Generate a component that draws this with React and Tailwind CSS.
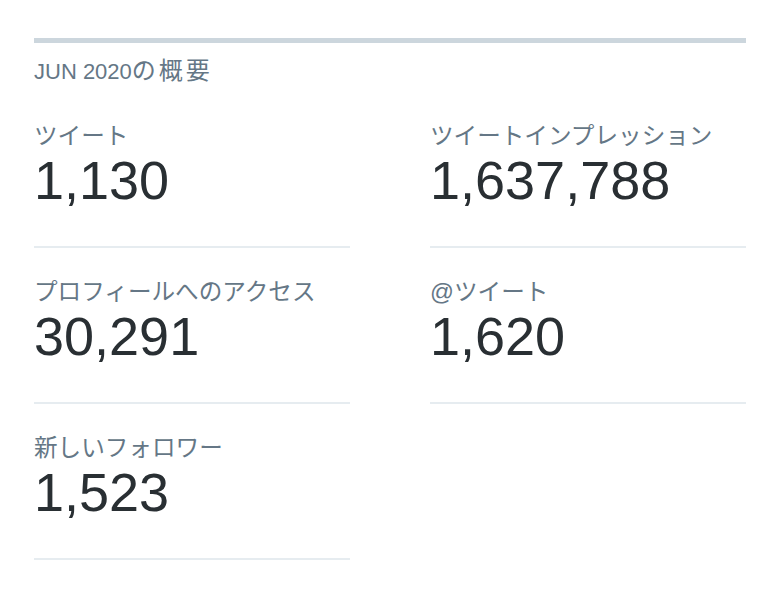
import React from 'react';

const stats = [
  { label: 'ツイート', value: '1,130' },
  { label: 'ツイートインプレッション', value: '1,637,788' },
  { label: 'プロフィールへのアクセス', value: '30,291' },
  { label: '@ツイート', value: '1,620' },
  { label: '新しいフォロワー', value: '1,523' },
];

export default function App() {
  return (
    <div
      className="min-h-screen bg-white pl-[34px] pr-[36px] pt-[38px]"
      style={{ fontFamily: '"Liberation Sans", "Noto Sans CJK JP", sans-serif' }}
    >
      {/* Top bar */}
      <div className="h-[5px] bg-[#ccd6dd]" />

      <h2 className="mt-[14px] mb-[6px] text-[22px] leading-[28px] font-normal text-[#657786]">
        JUN 2020<span className="text-[24px] tracking-[3px]">の概要</span>
      </h2>

      <div className="grid grid-cols-2 gap-x-[80px]">
        {stats.map((s) => (
          <div key={s.label} className="pt-[30px] pb-[38px] border-b-2 border-[#e6ecf0]">
            <div className="text-[23.6px] leading-[28px] text-[#657786]">{s.label}</div>
            <div className="mt-[2px] text-[54px] leading-[56px] text-[#292f33]">{s.value}</div>
          </div>
        ))}
      </div>
    </div>
  );
}
